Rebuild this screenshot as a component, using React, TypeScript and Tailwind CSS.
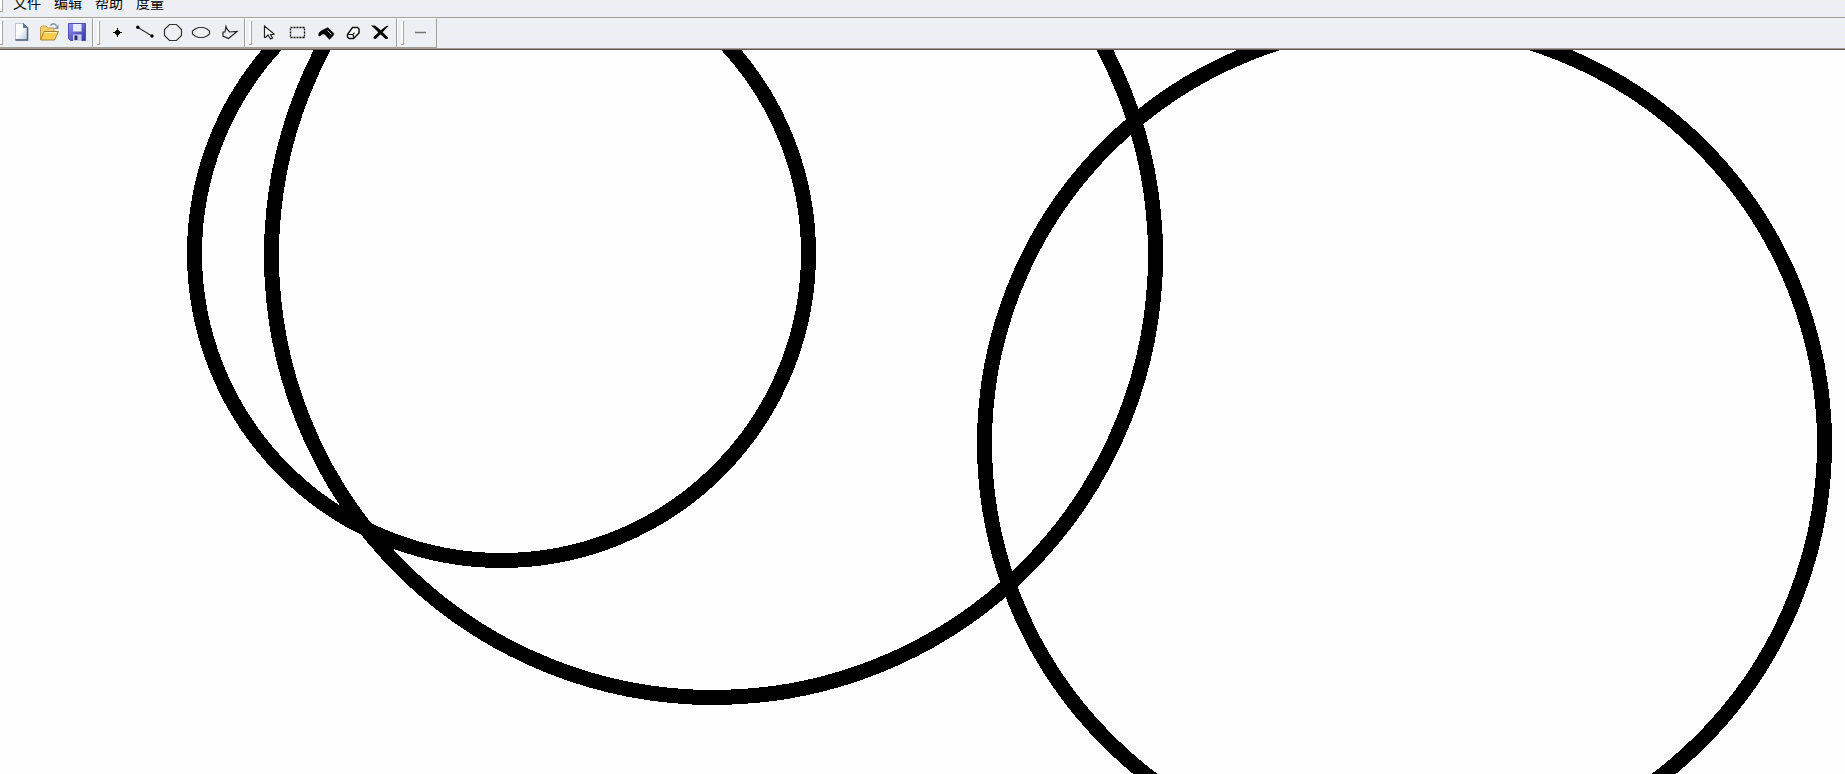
import type { ReactNode } from "react";

type Tool = { label: string; icon: ReactNode };

const fileTools: Tool[] = [
  {
    label: "新建",
    icon: (
      <>
        <defs>
          <linearGradient id="page" x1="0" y1="0" x2="1" y2="1">
            <stop offset="0.4" stopColor="#fff" />
            <stop offset="1" stopColor="#b4cbe0" />
          </linearGradient>
        </defs>
        <path d="M4.5 1.5h8l4 4v12.500h-12z" fill="url(#page)" stroke="#b9c6d6" />
        <path d="M16.500 5.500v12.500h-12" fill="none" stroke="#4a6078" strokeWidth="1.500" />
        <path d="M12.500 1.500v4h4z" fill="#5f7890" stroke="#5f7890" />
      </>
    ),
  },
  {
    label: "打开",
    icon: (
      <>
        <path d="M1.500 17.500V5.500l1.500-1.500h4l1.500 2h6.500v4" fill="#f0cf70" stroke="#c39b48" />
        <path d="M1.500 18L5 9.500h14.500l-4 8.500z" fill="#f9cd50" stroke="#a88034" />
        <path d="M5.500 10.500h12.500" stroke="#ffefb0" />
        <path d="M11.500 3.500c2-2.500 4.500-2.500 6 .5" fill="none" stroke="#8294a8" strokeWidth="1.500" />
        <path d="M19.500 2.500v4.500h-4.500z" fill="#8294a8" />
      </>
    ),
  },
  {
    label: "保存",
    icon: (
      <>
        <defs>
          <linearGradient id="disk" x1="0" y1="0" x2="1" y2="1">
            <stop offset="0" stopColor="#9494ee" />
            <stop offset="1" stopColor="#3434a0" />
          </linearGradient>
        </defs>
        <path d="M1.500 1.500h17v17h-15l-2-2z" fill="url(#disk)" stroke="#5050b0" />
        <path d="M6 2h8.500v7.500H6z" fill="#e6ecff" />
        <path d="M6 12.500h8.500V19H6z" fill="#ccd2e6" />
        <path d="M7.500 13.500h3V18h-3z" fill="#2c2c68" />
      </>
    ),
  },
];

const shapeTools: Tool[] = [
  {
    label: "点",
    icon: <path d="M10 6h1v2h1v1h1v1h2v1h-2v1h-1v1h-1v2h-1v-2H9v-1H8v-1H6v-1h2V9h1V8h1z" />,
  },
  {
    label: "线段",
    icon: (
      <>
        <path d="M3 5.500L17 14" stroke="#333" strokeWidth="1.200" />
        <circle cx="2.800" cy="5.200" r="1.700" />
        <circle cx="17" cy="14" r="1.700" />
      </>
    ),
  },
  {
    label: "圆",
    icon: <path d="M6.500 2.500h7l5 5v6l-5 5h-7l-5-5v-6z" fill="none" stroke="#333" strokeWidth="1.200" />,
  },
  {
    label: "椭圆",
    icon: <path d="M7.500 5.500h5l3.500 1.500 2.500 2v3l-2.500 2-3.500 1.500h-5L4 14l-2.500-2V9L4 7z" fill="none" stroke="#333" strokeWidth="1.200" />,
  },
  {
    label: "多边形",
    icon: <path d="M7 4.500l1 2.500 2.500 3 7.500-.5-8.500 7-5.500-2.500V10h2z" fill="none" stroke="#222" strokeWidth="1.200" />,
  },
];

const editTools: Tool[] = [
  {
    label: "选择",
    icon: <path d="M5.500 4v11.500h1l2.500-2.500 2.500 4 2-1-2-3.500H15v-.5z" fill="#fff" stroke="#222" strokeWidth="1.200" />,
  },
  {
    label: "框选",
    icon: <path d="M3.500 5.500h14v10h-14z" fill="none" stroke="#000" strokeWidth="1.300" strokeDasharray="2 1" />,
  },
  {
    label: "填充",
    icon: (
      <>
        <path d="M4 14c-1-3 1.500-5 4-6l3-1.500 2-.8 6 6-1 2-3.500 3.800L10 12.500c-1-1-3-1-5 1.500z" stroke="#000" strokeWidth="0.600" />
        <path d="M12.500 8.500l4 4" stroke="#eceff5" strokeWidth="0.800" />
      </>
    ),
  },
  {
    label: "擦除",
    icon: (
      <>
        <path d="M9.500 5.500h5l1.500 1.500v4l-5.500 5.500h-4l-2-1.500v-2.500z" fill="#fff" stroke="#111" strokeWidth="1.500" />
        <path d="M5.500 12.500h4l1 1.500v2M10 12.500l1.500-2" fill="none" stroke="#111" strokeWidth="1.200" />
      </>
    ),
  },
  {
    label: "删除",
    icon: (
      <>
        <path d="M0 3.500h4l5.500 4.500 7.500 7.500-.5 1.500h-2L7.500 10.500 3 6z" />
        <path d="M18 3.500l-3 .8L9.500 8.500l-7 6.500v1.500l2 .5 5.500-5 4.500-5z" />
      </>
    ),
  },
];

const lineTools: Tool[] = [
  { label: "线宽", icon: <path d="M4 10.500h11" stroke="#77736f" strokeWidth="1.500" /> },
];

const groups = [fileTools, shapeTools, editTools, lineTools];
const menus = ["文件", "编辑", "帮助", "度量"];

const circles = [
  { cx: 501.5, cy: 203.5, r: 307 },
  { cx: 713.5, cy: 205.5, r: 442 },
  { cx: 1404.5, cy: 393.5, r: 420 },
];

function Grip() {
  return <span className="h-6 w-[3px] shrink-0 border-r border-b border-[#aaa49c] bg-white" />;
}

function ToolGroup({ tools, first }: { tools: Tool[]; first: boolean }) {
  return (
    <div role="group" className="flex items-start border-t border-r border-b border-t-white border-r-[#a39e98] border-b-[#a39e98] pr-px">
      <div className={first ? "flex h-full w-[7px] items-center" : "flex h-full w-[10px] items-center border-l border-white pl-[3px]"}>
        <Grip />
      </div>
      {tools.map((tool) => (
        <button key={tool.label} type="button" aria-label={tool.label} className="flex h-[26px] w-7 items-center justify-center">
          <svg width="20" height="20" viewBox="0 0 20 20" aria-hidden="true">
            {tool.icon}
          </svg>
        </button>
      ))}
    </div>
  );
}

export default function App() {
  return (
    <div className="flex h-screen flex-col bg-[#fefefe] font-['Noto_Sans_CJK_SC',sans-serif] text-black">
      <header className="shrink-0 bg-[#eceff5] bg-[radial-gradient(circle_at_1px_1px,#f3f3de_0,transparent_1px)] bg-size-[4px_4px]">
        <nav className="flex h-[17px] items-end overflow-hidden pb-[5px]">
          <span className="h-5 w-[3px] border-r border-b border-[#aaa49c] bg-white" />
          <div className="flex gap-[13px] pl-[10px] text-[14px] leading-5">
            {menus.map((menu) => (
              <button key={menu} type="button" className="whitespace-nowrap">
                {menu}
              </button>
            ))}
          </div>
        </nav>
        <div className="flex h-[33px] border-t border-b border-t-[#a39e98] border-b-[#5c5a58]">
          <div className="flex grow border-b border-[#a39e98]">
            {groups.map((tools, i) => (
              <ToolGroup key={i} tools={tools} first={i === 0} />
            ))}
          </div>
        </div>
      </header>
      <main className="min-h-0 grow">
        <svg className="block h-full w-full" role="img" aria-label="画布" shapeRendering="crispEdges">
          {circles.map((c) => (
            <circle key={c.cx} cx={c.cx} cy={c.cy} r={c.r} fill="none" stroke="#000" strokeWidth="15" />
          ))}
        </svg>
      </main>
    </div>
  );
}
